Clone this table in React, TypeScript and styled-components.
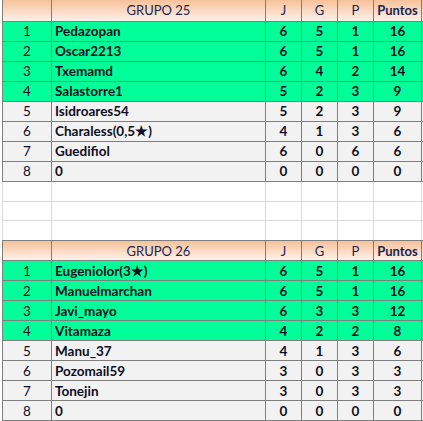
import React from 'react'
import styled, { createGlobalStyle } from 'styled-components'

//Global
const GlobalStyle = createGlobalStyle`
  body {
    margin: 0;
    background: #ffffff;
    font-family: Lato, "Liberation Sans", sans-serif;
  }
`

//Styled Components
const Sheet = styled.div`
  width: 423px;
  height: 421px;
  overflow: hidden;
  display: flex;
  flex-direction: column;
  padding-left: 2px;
  box-sizing: border-box;
`

const COLS = '49px 214px 36px 36px 36px 49px'

const HeaderRow = styled.div<{ $first?: boolean }>`
  display: grid;
  grid-template-columns: ${COLS};
  height: ${(p) => (p.$first ? '22px' : '21px')};
  box-sizing: border-box;
  background: linear-gradient(#f7c19a, #fdf1ea);
  border-top: ${(p) => (p.$first ? 'none' : '1px solid #7f7f7f')};
  border-bottom: 1px solid #7f7f7f;
`

const DataRow = styled.div<{ $bg: string }>`
  display: grid;
  grid-template-columns: ${COLS};
  height: 20px;
  box-sizing: border-box;
  background: ${(p) => p.$bg};
  border-bottom: 1px solid #7f7f7f;
`

const EmptyRow = styled.div<{ $last?: boolean }>`
  display: grid;
  grid-template-columns: ${COLS};
  height: ${(p) => (p.$last ? '19px' : '20px')};
  box-sizing: border-box;
  border-bottom: ${(p) => (p.$last ? 'none' : '1px solid #d9d9d9')};
`

const Cell = styled.div<{ $align?: string; $bold?: boolean; $last?: boolean }>`
  display: flex;
  align-items: center;
  justify-content: ${(p) => p.$align || 'center'};
  padding-left: ${(p) => (p.$align === 'flex-start' ? '3px' : '0')};
  border-left: 1px solid #7f7f7f;
  border-right: ${(p) => (p.$last ? '1px solid #7f7f7f' : 'none')};
  box-sizing: border-box;
  font-size: 13.5px;
  font-weight: ${(p) => (p.$bold ? 700 : 400)};
  color: #0d0d26;
  white-space: nowrap;
  overflow: hidden;
`

const HeadCell = styled(Cell)`
  color: #1a2550;
  font-size: 13px;
`

const GridCell = styled.div<{ $last?: boolean }>`
  border-left: 1px solid #d9d9d9;
  border-right: ${(p) => (p.$last ? '1px solid #d9d9d9' : 'none')};
`

// Data
interface IPlayer {
  name: string
  j: number
  g: number
  p: number
  pts: number
}

const grupo25: IPlayer[] = [
  { name: 'Pedazopan', j: 6, g: 5, p: 1, pts: 16 },
  { name: 'Oscar2213', j: 6, g: 5, p: 1, pts: 16 },
  { name: 'Txemamd', j: 6, g: 4, p: 2, pts: 14 },
  { name: 'Salastorre1', j: 5, g: 2, p: 3, pts: 9 },
  { name: 'Isidroares54', j: 5, g: 2, p: 3, pts: 9 },
  { name: 'Charaless(0,5★)', j: 4, g: 1, p: 3, pts: 6 },
  { name: 'Guedifiol', j: 6, g: 0, p: 6, pts: 6 },
  { name: '0', j: 0, g: 0, p: 0, pts: 0 },
]

const grupo26: IPlayer[] = [
  { name: 'Eugeniolor(3★)', j: 6, g: 5, p: 1, pts: 16 },
  { name: 'Manuelmarchan', j: 6, g: 5, p: 1, pts: 16 },
  { name: 'Javi_mayo', j: 6, g: 3, p: 3, pts: 12 },
  { name: 'Vitamaza', j: 4, g: 2, p: 2, pts: 8 },
  { name: 'Manu_37', j: 4, g: 1, p: 3, pts: 6 },
  { name: 'Pozomail59', j: 3, g: 0, p: 3, pts: 3 },
  { name: 'Tonejin', j: 3, g: 0, p: 3, pts: 3 },
  { name: '0', j: 0, g: 0, p: 0, pts: 0 },
]

//React Components
function Group({ title, players, first }: { title: string; players: IPlayer[]; first?: boolean }) {
  return (
    <>
      <HeaderRow $first={first}>
        <HeadCell />
        <HeadCell>{title}</HeadCell>
        <HeadCell>J</HeadCell>
        <HeadCell>G</HeadCell>
        <HeadCell>P</HeadCell>
        <HeadCell $bold $last>
          Puntos
        </HeadCell>
      </HeaderRow>
      {players.map((pl, i) => (
        <DataRow key={i} $bg={i < 4 ? '#00ff99' : '#f2f2f2'}>
          <Cell>{i + 1}</Cell>
          <Cell $align="flex-start" $bold>
            {pl.name}
          </Cell>
          <Cell $bold>{pl.j}</Cell>
          <Cell $bold>{pl.g}</Cell>
          <Cell $bold>{pl.p}</Cell>
          <Cell $bold $last>
            {pl.pts}
          </Cell>
        </DataRow>
      ))}
    </>
  )
}

function Blank({ last }: { last?: boolean }) {
  return (
    <EmptyRow $last={last}>
      <GridCell />
      <GridCell />
      <GridCell />
      <GridCell />
      <GridCell />
      <GridCell $last />
    </EmptyRow>
  )
}

export default function App() {
  return (
    <Sheet>
      <GlobalStyle />
      <Group title="GRUPO 25" players={grupo25} first />
      <Blank />
      <Blank />
      <Blank last />
      <Group title="GRUPO 26" players={grupo26} />
    </Sheet>
  )
}
